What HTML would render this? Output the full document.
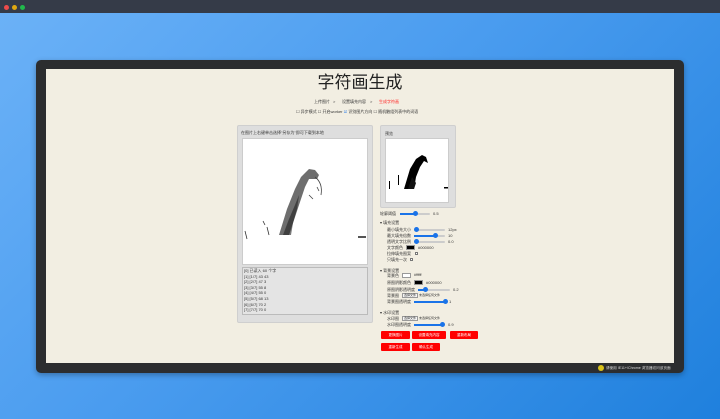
<!DOCTYPE html>
<html><head><meta charset="utf-8"><style>
*{margin:0;padding:0;box-sizing:border-box}
body{width:720px;height:419px;overflow:hidden;background:linear-gradient(135deg,#6cb2f7 0%,#4a9cef 45%,#1f80dd 100%);font-family:"Liberation Sans","Noto Sans CJK SC",sans-serif;position:relative}
.top{position:absolute;left:0;top:0;width:720px;height:13px;background:#353b48}
.dot{position:absolute;top:5px;width:5px;height:5px;border-radius:50%}
.frame{position:absolute;left:36px;top:60px;width:648px;height:313px;background:#2c2d2f;border-radius:5px;box-shadow:0 2px 6px rgba(0,0,0,.3)}
.screen{position:absolute;left:46px;top:69px;width:628px;height:294px;background:#f2eee2;overflow:hidden}
.t{position:absolute;font-size:4px;color:#333;white-space:nowrap;line-height:5px}
.panel{position:absolute;background:#dedede;border:1px solid #cfcfcf;border-radius:2px}
.white{position:absolute;background:#fff;border:1px solid #ccc}
.sl{position:absolute;height:2px;background:#ccc;border-radius:1px}
.sl b{position:absolute;left:0;top:0;height:2px;background:#1a73e8}
.sl i{position:absolute;top:-2px;width:5px;height:5px;border-radius:50%;background:#1a73e8}
.btn{position:absolute;height:8px;background:#f00;color:#fff;font-size:3.5px;text-align:center;line-height:8px;border-radius:1px}
.sw{position:absolute;width:9px;height:5px;border:1px solid #999}
.fb{position:absolute;height:5px;border:1px solid #999;background:#f4f4f4;font-size:3px;line-height:3px;padding:0 1px;color:#333}
.cb{position:absolute;width:3px;height:3px;border:.5px solid #777;background:#fff}
</style></head><body>
<div class="top"><div class="dot" style="left:4px;background:#ee4b4b"></div><div class="dot" style="left:12px;background:#e0a810"></div><div class="dot" style="left:20px;background:#21b94c"></div></div>
<div class="frame"></div>
<div class="screen"></div>
<div class="t" style="left:0;width:720px;text-align:center;top:73px;font-size:17px;line-height:20px;color:#222">字符画生成</div>
<div class="t" style="left:314px;top:99px">上传图片</div>
<div class="t" style="left:333px;top:99px">&gt;</div>
<div class="t" style="left:342px;top:99px">设置填充内容</div>
<div class="t" style="left:370px;top:99px">&gt;</div>
<div class="t" style="left:379px;top:99px;color:#f22">生成字符画</div>
<div class="t" style="left:296px;top:109px">☐ 异步模式 ☐ 开启worker <span style="color:#1a73e8">☑</span> 识别图片方向 ☐ 随机触组列表中的词语</div>

<div class="panel" style="left:237px;top:125px;width:136px;height:198px"></div>
<div class="t" style="left:241px;top:130px">在图片上右键单击选择"另存为"即可下载到本地</div>
<div class="white" style="left:242px;top:138px;width:126px;height:127px">
<svg width="126" height="127" viewBox="0 0 126 127">
<path d="M36 96 L44 70 L52 50 L58 38 L66 30 L72 31 L76 36 L74 40 L66 40 L62 48 L58 60 L54 72 L50 84 L46 96 Z" fill="#555" opacity=".85"/>
<path d="M40 96 L46 80 L52 66 L56 56 L54 70 L50 84 L48 96Z" fill="#222" opacity=".6"/>
<path d="M72 38 Q80 44 78 56 M66 56 L70 60 M74 48 L76 52" stroke="#444" stroke-width=".8" fill="none"/>
<path d="M2 92 L4 100 M24 88 L26 96 M20 82 L22 86" stroke="#333" stroke-width=".8"/>
<rect x="115" y="97" width="8" height="2" fill="#555"/>
</svg></div>
<div class="white" style="left:242px;top:267px;width:126px;height:48px;background:#e4e4e4;border-color:#bbb"></div>
<div class="t" style="left:244px;top:268px;line-height:5.6px;font-size:4px">[0] 已读入 60 个字<br>[1] [1/7] 43 43<br>[2] [2/7] 47 3<br>[3] [3/7] 55 8<br>[4] [4/7] 55 0<br>[5] [5/7] 68 13<br>[6] [6/7] 70 2<br>[7] [7/7] 70 0</div>

<div class="panel" style="left:380px;top:125px;width:76px;height:83px"></div>
<div class="t" style="left:385px;top:131px">预览</div>
<div class="white" style="left:385px;top:138px;width:64px;height:65px">
<svg width="64" height="65"><path d="M18 50 L24 30 L30 20 L36 16 L40 18 L42 24 L38 22 L34 28 L30 38 L28 50Z" fill="#000"/><path d="M22 50 L26 38 L30 44 L28 50Z" fill="#111"/><rect x="3" y="42" width="1" height="8" fill="#000"/><rect x="12" y="36" width="1" height="10" fill="#000"/><rect x="58" y="48" width="4" height="1.5" fill="#000"/></svg></div>

<div class="t" style="left:380px;top:211px">轮廓阈值</div>
<div class="sl" style="left:400px;top:213px;width:30px"><b style="width:15px"></b><i style="left:13px"></i></div>
<div class="t" style="left:433px;top:211px">0.5</div>

<div class="t" style="left:380px;top:220px">▾ 填充设置</div>
<div class="t" style="left:387px;top:227px">最小填充大小</div>
<div class="sl" style="left:414px;top:229px;width:31px"><i style="left:0"></i></div>
<div class="t" style="left:448px;top:227px">12px</div>
<div class="t" style="left:387px;top:233px">最大填充倍数</div>
<div class="sl" style="left:414px;top:235px;width:31px"><b style="width:20px"></b><i style="left:19px"></i></div>
<div class="t" style="left:448px;top:233px">10</div>
<div class="t" style="left:387px;top:239px">透明文字比例</div>
<div class="sl" style="left:414px;top:241px;width:31px"><i style="left:0"></i></div>
<div class="t" style="left:448px;top:239px">0.0</div>
<div class="t" style="left:387px;top:245px">文字颜色</div>
<div class="sw" style="left:406px;top:245px;background:#000"></div>
<div class="t" style="left:418px;top:245px">#000000</div>
<div class="t" style="left:387px;top:251px">拉伸填充图案</div>
<div class="cb" style="left:415px;top:252px"></div>
<div class="t" style="left:387px;top:257px">只填充一次</div>
<div class="cb" style="left:410px;top:258px"></div>

<div class="t" style="left:380px;top:268px">▾ 背景设置</div>
<div class="t" style="left:387px;top:273px">背景色</div>
<div class="sw" style="left:402px;top:273px;background:#fff"></div>
<div class="t" style="left:414px;top:273px;font-size:3.5px">#ffffff</div>
<div class="t" style="left:387px;top:280px">原图阴影颜色</div>
<div class="sw" style="left:414px;top:280px;background:#000"></div>
<div class="t" style="left:426px;top:280px">#000000</div>
<div class="t" style="left:387px;top:287px">原图阴影透明度</div>
<div class="sl" style="left:418px;top:289px;width:32px"><b style="width:6px"></b><i style="left:5px"></i></div>
<div class="t" style="left:453px;top:287px">0.2</div>
<div class="t" style="left:387px;top:293px">背景图</div>
<div class="fb" style="left:402px;top:293px">选择文件</div>
<div class="t" style="left:419px;top:293px;font-size:3px">未选择任何文件</div>
<div class="t" style="left:387px;top:299px">背景图透明度</div>
<div class="sl" style="left:414px;top:301px;width:32px"><b style="width:30px"></b><i style="left:29px"></i></div>
<div class="t" style="left:449px;top:299px">1</div>

<div class="t" style="left:380px;top:310px">▾ 水印设置</div>
<div class="t" style="left:387px;top:316px">水印图</div>
<div class="fb" style="left:402px;top:316px">选择文件</div>
<div class="t" style="left:419px;top:316px;font-size:3px">未选择任何文件</div>
<div class="t" style="left:387px;top:322px">水印图透明度</div>
<div class="sl" style="left:414px;top:324px;width:30px"><b style="width:27px"></b><i style="left:26px"></i></div>
<div class="t" style="left:448px;top:322px">0.9</div>

<div class="btn" style="left:381px;top:331px;width:29px">更换图片</div>
<div class="btn" style="left:412px;top:331px;width:34px">设置填充内容</div>
<div class="btn" style="left:450px;top:331px;width:28px">重新布局</div>
<div class="btn" style="left:381px;top:343px;width:29px">重新生成</div>
<div class="btn" style="left:412px;top:343px;width:28px">确认生成</div>

<div style="position:absolute;left:598px;top:365px;width:6px;height:6px;border-radius:50%;background:#d9c21a"></div>
<div class="t" style="left:606px;top:366px;color:#ddd;font-size:3.6px">请使用 IE11+/Chrome 浏览器访问该页面</div>
</body></html>
